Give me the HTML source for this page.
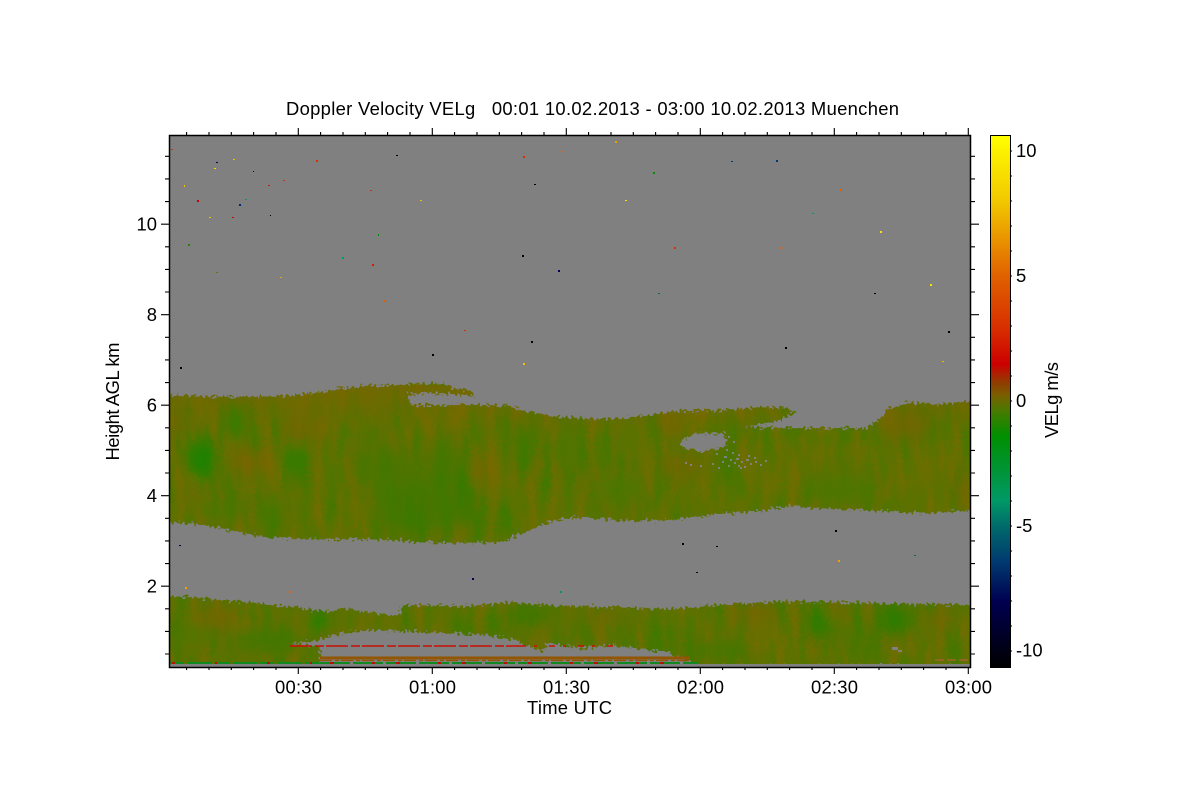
<!DOCTYPE html>
<html>
<head>
<meta charset="utf-8">
<title>Doppler Velocity VELg</title>
<style>
html,body{margin:0;padding:0;background:#fff;width:1200px;height:800px;overflow:hidden}
svg{display:block}
text{font-family:"Liberation Sans",sans-serif;font-size:18.4px;fill:#000}
</style>
</head>
<body>
<svg width="1200" height="800" viewBox="0 0 1200 800" xmlns="http://www.w3.org/2000/svg">
<defs>
<linearGradient id="cb" x1="0" y1="0" x2="0" y2="1">
<stop offset="0" stop-color="#ffff00"/>
<stop offset="0.124" stop-color="#f2c800"/>
<stop offset="0.265" stop-color="#e06000"/>
<stop offset="0.36" stop-color="#d83000"/>
<stop offset="0.43" stop-color="#cc0000"/>
<stop offset="0.463" stop-color="#923a00"/>
<stop offset="0.49" stop-color="#786000"/>
<stop offset="0.515" stop-color="#4c7800"/>
<stop offset="0.565" stop-color="#008f00"/>
<stop offset="0.686" stop-color="#009966"/>
<stop offset="0.735" stop-color="#006a6a"/>
<stop offset="0.80" stop-color="#003a70"/>
<stop offset="0.876" stop-color="#000050"/>
<stop offset="0.95" stop-color="#000020"/>
<stop offset="1" stop-color="#000000"/>
</linearGradient>
<linearGradient id="topb" x1="0" y1="0" x2="0" y2="1">
<stop offset="0" stop-color="#7a6400" stop-opacity=".7"/>
<stop offset="1" stop-color="#7a6400" stop-opacity="0"/>
</linearGradient>
<filter id="tex" filterUnits="userSpaceOnUse" x="160" y="375" width="820" height="300" color-interpolation-filters="sRGB">
<feTurbulence type="fractalNoise" baseFrequency="0.08 0.018" numOctaves="3" seed="7"/>
<feColorMatrix type="matrix" values="0.3 0 0 0 0.21  -0.07 0 0 0 0.48  0 0 0 0 0  0 0 0 0 1"/>
</filter>
<filter id="jag" filterUnits="userSpaceOnUse" x="150" y="370" width="840" height="310" color-interpolation-filters="sRGB">
<feTurbulence type="fractalNoise" baseFrequency="0.35 0.35" numOctaves="1" seed="3" result="n"/>
<feDisplacementMap in="SourceGraphic" in2="n" scale="11" xChannelSelector="R" yChannelSelector="G"/>
</filter>
<filter id="bl" x="-50%" y="-50%" width="200%" height="200%"><feGaussianBlur stdDeviation="5 7"/></filter>
<clipPath id="plot"><rect x="170" y="136" width="800" height="528.5"/></clipPath>
<clipPath id="cloud">
<polygon points="160,395 225,397 292,396 332,390 365,386 432,383 446,384 452,388 470,390 480,405 510,406 520,410 560,417 600,419 627,418 677,411 727,410 757,407 785,408 797,412 775,422 745,427 790,428 830,428 867,428 880,418 887,410 905,403 940,404 980,400 980,510 930,513 880,511 830,509 790,506 760,511 727,513 673,520 627,521 577,517 560,519 537,527 500,542 465,543 422,542 365,539 298,539 262,537 232,531 205,525 160,521"/>
<polygon points="160,596 190,597 230,601 270,604 300,608 330,612 345,608 360,611 398,616 402,605 440,606 470,606 510,602 560,606 620,607 670,609 730,604 790,601 860,603 980,605 980,666 693,666 693,663 667,652 647,650 613,645 580,648 547,643 543,652 533,648 513,640 487,635 446,633 380,630 340,633 320,640 290,643 320,648 320,666 160,666"/>
</clipPath>
</defs>

<rect width="1200" height="800" fill="#fff"/>
<rect x="169" y="135" width="802" height="532" fill="#808080"/>

<g clip-path="url(#plot)">
<g filter="url(#jag)">
<g clip-path="url(#cloud)">
<rect x="160" y="375" width="820" height="300" filter="url(#tex)"/>
<rect x="160" y="385" width="820" height="48" fill="url(#topb)"/>
<g filter="url(#bl)" opacity=".68">
<ellipse cx="200" cy="458" rx="15" ry="20" fill="#108600"/>
<ellipse cx="235" cy="422" rx="9" ry="16" fill="#2c8000"/>
<ellipse cx="240" cy="460" rx="8" ry="11" fill="#806000"/>
<ellipse cx="252" cy="462" rx="7" ry="11" fill="#846000"/>
<ellipse cx="266" cy="462" rx="5" ry="11" fill="#846000"/>
<ellipse cx="295" cy="460" rx="14" ry="14" fill="#2c8000"/>
<ellipse cx="305" cy="430" rx="22" ry="11" fill="#786400"/>
<ellipse cx="178" cy="425" rx="7" ry="12" fill="#7c6200"/>
<ellipse cx="195" cy="495" rx="8" ry="14" fill="#706a00"/>
<ellipse cx="220" cy="510" rx="20" ry="8" fill="#3c7a00"/>
<ellipse cx="270" cy="515" rx="12" ry="18" fill="#3c7a00"/>
<ellipse cx="420" cy="505" rx="42" ry="28" fill="#387a00"/>
<ellipse cx="385" cy="470" rx="32" ry="22" fill="#427800"/>
<ellipse cx="445" cy="470" rx="18" ry="30" fill="#427800"/>
<ellipse cx="465" cy="495" rx="10" ry="30" fill="#2f7c00"/>
<ellipse cx="525" cy="450" rx="10" ry="24" fill="#347c00"/>
<ellipse cx="565" cy="450" rx="16" ry="16" fill="#4a7800"/>
<ellipse cx="600" cy="450" rx="8" ry="22" fill="#4a7800"/>
<ellipse cx="620" cy="490" rx="24" ry="14" fill="#4a7800"/>
<ellipse cx="480" cy="470" rx="12" ry="14" fill="#726800"/>
<ellipse cx="670" cy="425" rx="12" ry="10" fill="#786400"/>
<ellipse cx="680" cy="465" rx="22" ry="10" fill="#786400"/>
<ellipse cx="735" cy="430" rx="14" ry="7" fill="#3c7a00"/>
<ellipse cx="840" cy="490" rx="35" ry="14" fill="#4a7800"/>
<ellipse cx="905" cy="425" rx="25" ry="14" fill="#786400"/>
<ellipse cx="962" cy="490" rx="8" ry="16" fill="#7a6400"/>
<ellipse cx="215" cy="618" rx="22" ry="10" fill="#7c6200"/>
<ellipse cx="320" cy="622" rx="14" ry="9" fill="#108600"/>
<ellipse cx="270" cy="640" rx="35" ry="12" fill="#387a00"/>
<ellipse cx="190" cy="635" rx="20" ry="12" fill="#4c7800"/>
<ellipse cx="530" cy="615" rx="20" ry="10" fill="#2f7c00"/>
<ellipse cx="600" cy="618" rx="28" ry="7" fill="#706a00"/>
<ellipse cx="755" cy="612" rx="22" ry="8" fill="#7a6400"/>
<ellipse cx="820" cy="622" rx="14" ry="16" fill="#1c8000"/>
<ellipse cx="895" cy="620" rx="20" ry="14" fill="#1c8000"/>
<ellipse cx="835" cy="610" rx="10" ry="6" fill="#7c6200"/>
<ellipse cx="940" cy="620" rx="14" ry="8" fill="#7a6400"/>
<ellipse cx="720" cy="650" rx="30" ry="8" fill="#387a00"/>
</g>
</g>
<polygon points="682,440 695,433 725,433 727,446 700,452 682,447" fill="#808080"/>
<polygon points="408,394 440,393 480,397 482,404 450,405 410,405" fill="#808080"/>
</g>

<!-- small grey speckles in the cloud hole -->
<g fill="#808080" shape-rendering="crispEdges">
<rect x="728" y="436" width="2" height="2"/><rect x="733" y="441" width="2" height="2"/><rect x="716" y="453" width="2" height="2"/>
<rect x="724" y="456" width="3" height="2"/><rect x="730" y="459" width="2" height="2"/><rect x="736" y="458" width="3" height="2"/>
<rect x="741" y="461" width="2" height="2"/><rect x="746" y="459" width="3" height="2"/><rect x="750" y="463" width="2" height="2"/>
<rect x="755" y="461" width="2" height="2"/><rect x="760" y="464" width="2" height="2"/><rect x="728" y="465" width="2" height="2"/>
<rect x="744" y="466" width="2" height="2"/><rect x="718" y="467" width="2" height="2"/><rect x="690" y="464" width="2" height="2"/>
<rect x="685" y="462" width="2" height="2"/><rect x="700" y="465" width="2" height="2"/><rect x="738" y="465" width="2" height="2"/>
<rect x="726" y="449" width="2" height="2"/><rect x="732" y="452" width="2" height="2"/><rect x="738" y="454" width="2" height="2"/>
<rect x="734" y="462" width="2" height="2"/><rect x="748" y="455" width="2" height="2"/><rect x="754" y="457" width="2" height="2"/>
<rect x="765" y="460" width="2" height="2"/><rect x="722" y="461" width="2" height="2"/><rect x="712" y="463" width="2" height="2"/>
<rect x="740" y="467" width="2" height="2"/>
<rect x="892" y="647" width="6" height="3"/><rect x="898" y="650" width="4" height="2"/>
</g>

<!-- bottom strips -->
<line x1="290" y1="646" x2="520" y2="646" stroke="#c81000" stroke-width="1.6" stroke-dasharray="22 3 9 2"/>
<line x1="520" y1="646" x2="620" y2="646" stroke="#c81000" stroke-width="1.4" stroke-dasharray="6 8 3 12"/>
<rect x="320" y="656.5" width="370" height="3" fill="#925500"/>
<line x1="320" y1="660.5" x2="690" y2="660.5" stroke="#925500" stroke-width="1.2" stroke-dasharray="12 3 4 2"/>
<line x1="320" y1="663" x2="698" y2="663" stroke="#108a20" stroke-width="2" stroke-dasharray="30 3"/>
<line x1="330" y1="663" x2="698" y2="663" stroke="#b81000" stroke-width="2" stroke-dasharray="4 38 3 21"/>
<line x1="170" y1="663" x2="320" y2="663" stroke="#108a20" stroke-width="2" stroke-dasharray="14 4 24 3"/>
<line x1="172" y1="663" x2="320" y2="663" stroke="#b81000" stroke-width="2" stroke-dasharray="3 40 2 50"/>
<line x1="935" y1="660" x2="968" y2="660" stroke="#a56030" stroke-width="1.5" stroke-dasharray="9 3"/>
<rect x="170" y="664" width="800" height="2" fill="#808080"/>
</g>

<!-- speckles -->
<g shape-rendering="crispEdges">
<rect x="171" y="149" width="2" height="1" fill="#b04000"/><rect x="184" y="185" width="1" height="2" fill="#f0c000"/>
<rect x="197" y="200" width="2" height="2" fill="#cc0000"/><rect x="188" y="244" width="2" height="2" fill="#2c8000"/>
<rect x="216" y="162" width="2" height="1" fill="#000050"/><rect x="214" y="168" width="2" height="1" fill="#f8d800"/>
<rect x="209" y="217" width="2" height="1" fill="#f0c000"/><rect x="216" y="272" width="2" height="1" fill="#7a7000"/>
<rect x="233" y="159" width="2" height="1" fill="#f0c000"/><rect x="239" y="204" width="2" height="2" fill="#002a70"/>
<rect x="232" y="217" width="2" height="1" fill="#cc0000"/><rect x="245" y="199" width="2" height="1" fill="#009966"/>
<rect x="253" y="171" width="1" height="1" fill="#000"/><rect x="268" y="185" width="2" height="1" fill="#cc2000"/>
<rect x="270" y="215" width="1" height="1" fill="#000"/><rect x="283" y="180" width="2" height="1" fill="#d83000"/>
<rect x="280" y="277" width="2" height="1" fill="#f0a000"/><rect x="316" y="160" width="2" height="2" fill="#d83000"/>
<rect x="342" y="257" width="2" height="2" fill="#009966"/><rect x="370" y="190" width="2" height="1" fill="#d83000"/>
<rect x="372" y="264" width="2" height="2" fill="#cc2000"/><rect x="378" y="234" width="1" height="2" fill="#008f00"/>
<rect x="396" y="155" width="2" height="1" fill="#000"/><rect x="384" y="300" width="2" height="2" fill="#e06000"/>
<rect x="420" y="200" width="2" height="1" fill="#f0c000"/><rect x="432" y="354" width="2" height="2" fill="#000"/>
<rect x="464" y="330" width="2" height="1" fill="#d83000"/><rect x="523" y="156" width="2" height="2" fill="#d83000"/>
<rect x="534" y="184" width="2" height="1" fill="#000"/><rect x="522" y="255" width="2" height="2" fill="#000"/>
<rect x="558" y="270" width="2" height="2" fill="#000050"/><rect x="562" y="151" width="2" height="1" fill="#e06000"/>
<rect x="531" y="341" width="2" height="2" fill="#000"/><rect x="523" y="363" width="2" height="2" fill="#f0c000"/>
<rect x="615" y="141" width="2" height="2" fill="#f0a000"/><rect x="625" y="200" width="2" height="1" fill="#f8e000"/>
<rect x="653" y="172" width="2" height="2" fill="#008f00"/><rect x="674" y="247" width="2" height="2" fill="#d83000"/>
<rect x="658" y="293" width="2" height="1" fill="#006a6a"/><rect x="731" y="161" width="2" height="1" fill="#003a70"/>
<rect x="776" y="160" width="2" height="2" fill="#003a70"/><rect x="780" y="247" width="2" height="2" fill="#e06000"/>
<rect x="812" y="213" width="2" height="1" fill="#009966"/><rect x="785" y="347" width="2" height="2" fill="#000"/>
<rect x="840" y="189" width="2" height="2" fill="#e06000"/><rect x="880" y="231" width="2" height="2" fill="#f8e000"/>
<rect x="874" y="293" width="2" height="1" fill="#000"/><rect x="930" y="284" width="2" height="2" fill="#f8e000"/>
<rect x="948" y="331" width="2" height="2" fill="#000"/><rect x="942" y="361" width="2" height="1" fill="#f0c000"/>
<rect x="835" y="530" width="2" height="2" fill="#000"/><rect x="682" y="543" width="2" height="2" fill="#000"/>
<rect x="716" y="546" width="2" height="1" fill="#000"/><rect x="472" y="578" width="2" height="2" fill="#000050"/>
<rect x="838" y="560" width="2" height="2" fill="#f0a000"/><rect x="914" y="555" width="2" height="1" fill="#006a6a"/>
<rect x="180" y="367" width="2" height="2" fill="#000"/><rect x="179" y="545" width="2" height="1" fill="#000050"/>
<rect x="185" y="587" width="2" height="2" fill="#f0a000"/><rect x="290" y="591" width="2" height="2" fill="#e06000"/>
<rect x="560" y="591" width="2" height="2" fill="#009966"/><rect x="696" y="572" width="2" height="1" fill="#000"/>
</g>

<!-- frame and ticks -->
<rect x="169.5" y="135.5" width="801" height="532" fill="none" stroke="#000" stroke-width="1.5"/>
<path fill="none" stroke="#000" stroke-width="1.1" d="M186.6 667v3M209 667v3M231.3 667v3M253.6 667v3M276 667v3M298.3 667v7M320.6 667v3M343 667v3M365.3 667v3M387.6 667v3M410 667v3M432.3 667v7M454.6 667v3M477 667v3M499.3 667v3M521.6 667v3M544 667v3M566.3 667v7M588.6 667v3M611 667v3M633.3 667v3M655.6 667v3M678 667v3M700.3 667v7M722.6 667v3M745 667v3M767.3 667v3M789.6 667v3M812 667v3M834.3 667v7M856.6 667v3M879 667v3M901.3 667v3M923.6 667v3M946 667v3M968.3 667v7
M186.6 135v-3M209 135v-3M231.3 135v-3M253.6 135v-3M276 135v-3M298.3 135v-7M320.6 135v-3M343 135v-3M365.3 135v-3M387.6 135v-3M410 135v-3M432.3 135v-7M454.6 135v-3M477 135v-3M499.3 135v-3M521.6 135v-3M544 135v-3M566.3 135v-7M588.6 135v-3M611 135v-3M633.3 135v-3M655.6 135v-3M678 135v-3M700.3 135v-7M722.6 135v-3M745 135v-3M767.3 135v-3M789.6 135v-3M812 135v-3M834.3 135v-7M856.6 135v-3M879 135v-3M901.3 135v-3M923.6 135v-3M946 135v-3M968.3 135v-7
M169 156.3h-4M169 178.9h-4M169 201.6h-4M169 224.2h-8M169 246.8h-4M169 269.4h-4M169 292h-4M169 314.7h-8M169 337.3h-4M169 359.9h-4M169 382.6h-4M169 405.2h-8M169 427.8h-4M169 450.4h-4M169 473h-4M169 495.7h-8M169 518.3h-4M169 540.9h-4M169 563.6h-4M169 586.2h-8M169 608.8h-4M169 631.4h-4M169 654h-4
M971 156.3h4M971 178.9h4M971 201.6h4M971 224.2h8M971 246.8h4M971 269.4h4M971 292h4M971 314.7h8M971 337.3h4M971 359.9h4M971 382.6h4M971 405.2h8M971 427.8h4M971 450.4h4M971 473h4M971 495.7h8M971 518.3h4M971 540.9h4M971 563.6h4M971 586.2h8M971 608.8h4M971 631.4h4M971 654h4"/>

<!-- colorbar -->
<rect x="990.5" y="135.5" width="20" height="532" fill="url(#cb)" stroke="#000" stroke-width="1"/>
<path fill="none" stroke="#000" stroke-width="1.1" d="M1010 151h2M1010 176h2M1010 201h2M1010 226h2M1010 251h2M1010 276h2M1010 301h2M1010 326h2M1010 351h2M1010 376h2M1010 401h2M1010 426h2M1010 451h2M1010 476h2M1010 501h2M1010 526h2M1010 551h2M1010 576h2M1010 601h2M1010 626h2M1010 651h2"/>

<!-- text -->
<text x="286" y="115" textLength="613" lengthAdjust="spacing" xml:space="preserve">Doppler Velocity VELg   00:01 10.02.2013 - 03:00 10.02.2013 Muenchen</text>
<g text-anchor="end">
<text x="157" y="230.5">10</text>
<text x="157" y="321">8</text>
<text x="157" y="411.5">6</text>
<text x="157" y="502">4</text>
<text x="157" y="592.5">2</text>
</g>
<text x="275" y="693.5" textLength="47" lengthAdjust="spacing">00:30</text>
<text x="409" y="693.5" textLength="47" lengthAdjust="spacing">01:00</text>
<text x="543" y="693.5" textLength="47" lengthAdjust="spacing">01:30</text>
<text x="677" y="693.5" textLength="47" lengthAdjust="spacing">02:00</text>
<text x="811" y="693.5" textLength="47" lengthAdjust="spacing">02:30</text>
<text x="945" y="693.5" textLength="47" lengthAdjust="spacing">03:00</text>
<text x="527" y="714" textLength="85" lengthAdjust="spacing">Time UTC</text>
<text transform="translate(119,460.5) rotate(-90)" textLength="118" lengthAdjust="spacing">Height AGL km</text>
<text transform="translate(1058,438) rotate(-90)" textLength="76" lengthAdjust="spacing">VELg m/s</text>
<text x="1016" y="157">10</text>
<text x="1016" y="282">5</text>
<text x="1016" y="407">0</text>
<text x="1016" y="532">-5</text>
<text x="1016" y="656.5">-10</text>
</svg>
</body>
</html>
